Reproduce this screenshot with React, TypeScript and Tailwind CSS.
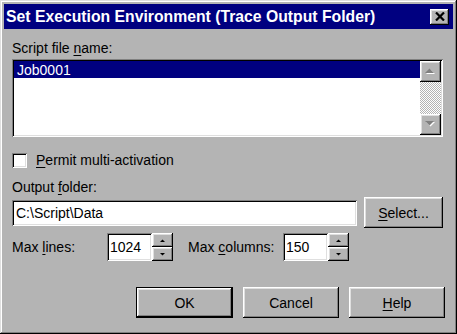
import React from "react";

const raised =
  "shadow-[inset_-1px_-1px_0_#000,inset_1px_1px_0_#fff,inset_-2px_-2px_0_#808080,inset_2px_2px_0_#dfdfdf]";
const sunken =
  "shadow-[inset_1px_1px_0_#808080,inset_-1px_-1px_0_#fff,inset_2px_2px_0_#000,inset_-2px_-2px_0_#dfdfdf]";

function Arrow({ dir, disabled }: { dir: "up" | "down"; disabled?: boolean }) {
  const pts = dir === "up" ? "0,5 9,5 4.5,0.5" : "0,0 9,0 4.5,4.5";
  return (
    <svg width="11" height="7" viewBox="0 0 11 7" className="block">
      {disabled && <polygon points={pts} transform="translate(1,1)" fill="#fff" />}
      <polygon points={pts} fill={disabled ? "#808080" : "#000"} />
    </svg>
  );
}

function SmallArrow({ dir }: { dir: "up" | "down" }) {
  const pts = dir === "up" ? "0,3 5,3 2.5,0.5" : "0,0 5,0 2.5,2.5";
  return (
    <svg width="5" height="3" viewBox="0 0 5 3" className="block">
      <polygon points={pts} fill="#000" />
    </svg>
  );
}

function Spin({ value }: { value: string }) {
  return (
    <div className="flex h-[28px] w-[66px]">
      <div className={`w-[45px] h-full bg-white ${sunken} flex items-center pl-[3px] text-[14px] text-black`}>
        {value}
      </div>
      <div className="w-[21px] h-full flex flex-col">
        <div className={`flex-1 bg-[#b4b4b4] ${raised} flex items-center justify-center`}>
          <SmallArrow dir="up" />
        </div>
        <div className={`flex-1 bg-[#b4b4b4] ${raised} flex items-center justify-center`}>
          <SmallArrow dir="down" />
        </div>
      </div>
    </div>
  );
}

export default function App() {
  return (
    <div
      className="w-[457px] h-[334px] bg-[#b4b4b4] p-[4px] flex flex-col shadow-[inset_-1px_-1px_0_#000,inset_1px_1px_0_#dfdfdf,inset_-2px_-2px_0_#808080,inset_2px_2px_0_#fff]"
      style={{ fontFamily: '"Liberation Sans", Arial, sans-serif' }}
    >
      <div className="h-[25px] bg-[#000080] flex items-center justify-between pl-[2px] pr-[4px]">
        <span className="text-white font-bold text-[15.75px] leading-none">
          Set Execution Environment (Trace Output Folder)
        </span>
        <div className={`w-[19px] h-[16px] bg-[#b4b4b4] ${raised} flex items-center justify-center`}>
          <svg width="10" height="9" viewBox="0 0 10 9">
            <path d="M1 0.5 L9 8.5 M9 0.5 L1 8.5" stroke="#000" strokeWidth="2.2" />
          </svg>
        </div>
      </div>

      <div className="px-[8px] flex flex-col text-[14px] text-black leading-[16px]">
        <div className="mt-[11px] h-[16px]">
          Script file <u className="underline-offset-[2px]">n</u>ame:
        </div>
        <div className={`mt-[3px] h-[78px] w-[431px] bg-white ${sunken} p-[2px] flex`}>
          <div className="flex-1">
            <div className="h-[17px] bg-[#000080] text-white pl-[3px] flex items-center">Job0001</div>
          </div>
          <div className="w-[21px] h-full flex flex-col">
            <div className={`h-[21px] bg-[#b4b4b4] ${raised} flex items-center justify-center`}>
              <Arrow dir="up" disabled />
            </div>
            <div className="flex-1 bg-[conic-gradient(#fff_25%,#b4b4b4_0_50%,#fff_0_75%,#b4b4b4_0)] bg-[length:2px_2px]" />
            <div className={`h-[21px] bg-[#b4b4b4] ${raised} flex items-center justify-center`}>
              <Arrow dir="down" disabled />
            </div>
          </div>
        </div>

        <div className="mt-[15px] h-[16px] flex items-center">
          <div className={`w-[15px] h-[15px] bg-white ${sunken}`} />
          <span className="ml-[9px]">
            <u className="underline-offset-[2px]">P</u>ermit multi-activation
          </span>
        </div>

        <div className="mt-[11px] h-[16px]">
          Output <u className="underline-offset-[2px]">f</u>older:
        </div>

        <div className="mt-[2px] h-[31px] flex items-center">
          <div className={`w-[345px] h-[26px] bg-white ${sunken} flex items-center pl-[4px]`}>
            C:\Script\Data
          </div>
          <div className={`ml-[7px] w-[79px] h-[31px] bg-[#b4b4b4] ${raised} flex items-center justify-center`}>
            <span>
              <u className="underline-offset-[2px]">S</u>elect...
            </span>
          </div>
        </div>

        <div className="mt-[5px] h-[28px] flex items-center">
          <div className="w-[95px]">
            Max <u className="underline-offset-[2px]">l</u>ines:
          </div>
          <Spin value="1024" />
          <div className="ml-[15px] w-[95px]">
            Max <u className="underline-offset-[2px]">c</u>olumns:
          </div>
          <Spin value="150" />
        </div>

        <div className="mt-[26px] flex justify-end gap-[10px]">
          <div className="w-[97px] h-[31px] border border-black">
            <div className={`w-full h-full bg-[#b4b4b4] ${raised} flex items-center justify-center`}>OK</div>
          </div>
          <div className={`w-[96px] h-[31px] bg-[#b4b4b4] ${raised} flex items-center justify-center`}>Cancel</div>
          <div className={`w-[96px] h-[31px] bg-[#b4b4b4] ${raised} flex items-center justify-center`}>
            <span>
              <u className="underline-offset-[2px]">H</u>elp
            </span>
          </div>
        </div>
      </div>
    </div>
  );
}
